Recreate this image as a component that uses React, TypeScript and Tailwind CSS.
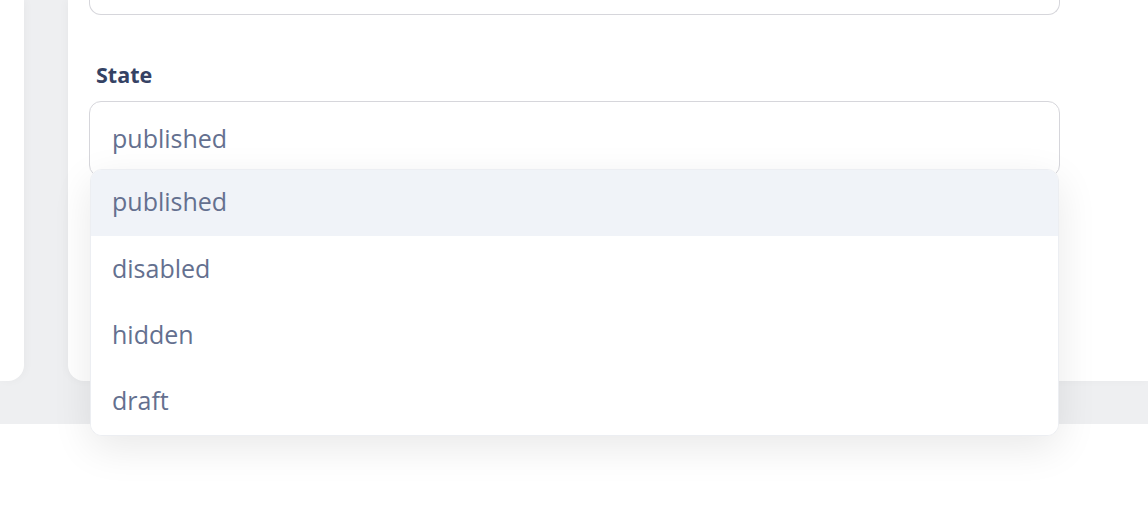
import React from 'react';

const OPTIONS = ['published', 'disabled', 'hidden', 'draft'];

export default function App() {
  return (
    <div
      className="w-full h-[506px] bg-white overflow-hidden"
      style={{ fontFamily: '"Open Sans", "Noto Sans", sans-serif' }}
    >
      {/* Page background */}
      <div className="h-[424px] bg-[#eeeff1] flex gap-[44px]">
        {/* Left panel */}
        <div className="w-[24px] h-[381px] bg-white rounded-br-[16px] shadow-[2px_0_8px_rgba(0,0,0,0.03)]" />

        {/* Main card */}
        <div className="flex-1 h-[381px] bg-white rounded-bl-[16px] shadow-[-2px_0_8px_rgba(0,0,0,0.03)] pl-[21px] pr-[88px]">
          {/* Previous field (cut off) */}
          <div className="h-[15px] border-x border-b border-[#d6d6db] rounded-b-[12px]" />

          {/* State field */}
          <div className="mt-[46px] pl-[7px] text-[21.5px] leading-[28px] font-bold text-[#354264]">
            State
          </div>
          <div className="relative mt-[12px]">
            <div className="h-[76px] border border-[#d6d6db] rounded-[12px] px-[22px] flex items-center text-[25px] text-[#64708f]">
              published
            </div>

            {/* Dropdown */}
            <div className="absolute left-[1px] right-[1px] top-[68px] z-10 bg-white rounded-[12px] border border-[#eceef2] overflow-hidden shadow-[0_12px_40px_rgba(0,0,0,0.09)]">
              {OPTIONS.map((o, i) => (
                <div
                  key={o}
                  className={`h-[66.25px] flex items-center px-[21px] pb-[2px] text-[25px] text-[#64708f] ${
                    i === 0 ? 'bg-[#f0f3f8]' : 'bg-white'
                  }`}
                >
                  {o}
                </div>
              ))}
            </div>
          </div>
        </div>
      </div>
    </div>
  );
}
